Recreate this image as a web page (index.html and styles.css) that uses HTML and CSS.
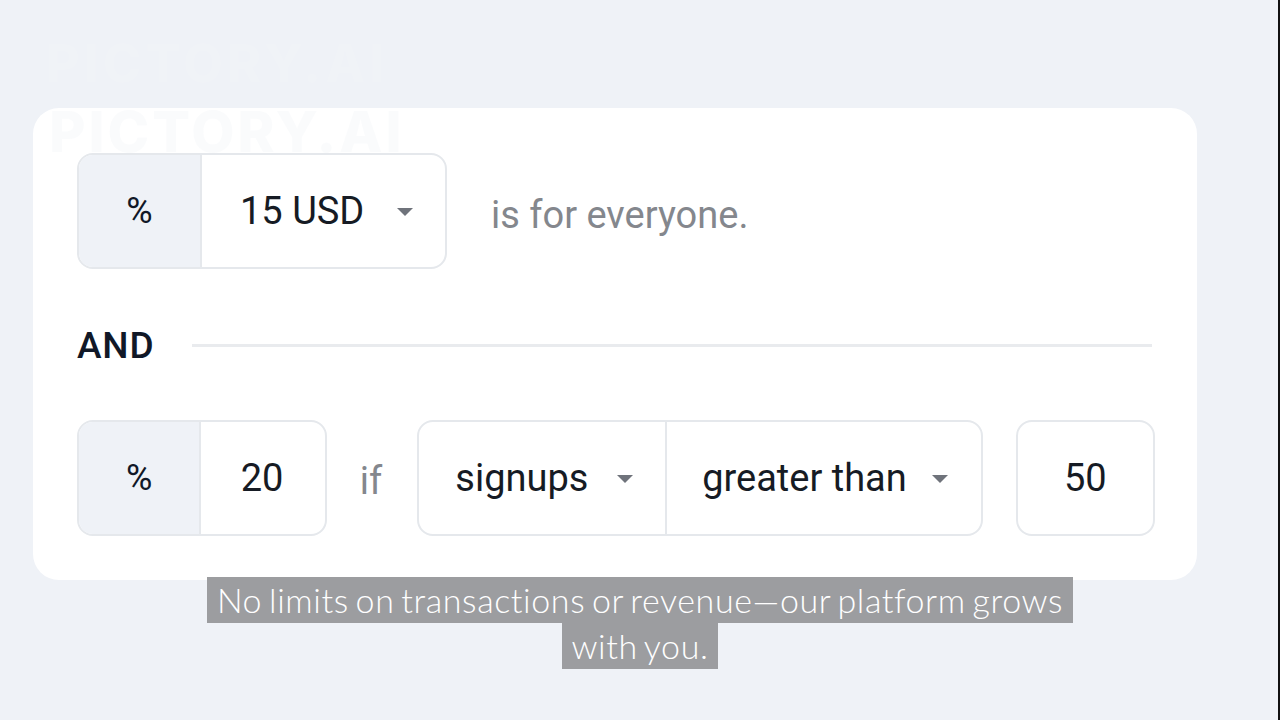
FILE: index.html
```html
<!DOCTYPE html>
<html lang="en">
<head>
<meta charset="utf-8">
<title>Commission rules</title>
<link rel="stylesheet" href="styles.css">
</head>
<body>
<div class="stage">
  <div class="ghost">PICTORY.AI</div>
  <div class="card">
    <div class="watermark">PICTORY.AI</div>
    <div class="row">
      <div class="group">
        <div class="prefix">%</div>
        <div class="cell select currency">
          <span>15 USD</span>
          <span class="caret"></span>
        </div>
      </div>
      <span class="muted everyone">is for everyone.</span>
    </div>
    <div class="divider-row">
      <span class="and">AND</span>
      <span class="rule"></span>
    </div>
    <div class="row row-gap">
      <div class="group">
        <div class="prefix">%</div>
        <div class="cell value">20</div>
      </div>
      <span class="muted if">if</span>
      <div class="group">
        <div class="cell select signups">
          <span>signups</span>
          <span class="caret"></span>
        </div>
        <div class="cell select sep compare">
          <span>greater than</span>
          <span class="caret"></span>
        </div>
      </div>
      <div class="group">
        <div class="cell number">50</div>
      </div>
    </div>
  </div>
  <div class="caption">
    <span class="caption-line">No limits on transactions or revenue—our platform grows</span>
    <span class="caption-line">with you.</span>
  </div>
  <div class="edge"></div>
</div>
</body>
</html>
```

FILE: styles.css
```css
* { box-sizing: border-box; }
html, body {
  margin: 0;
  padding: 0;
  width: 1280px;
  height: 720px;
  overflow: hidden;
  background: #eff2f7;
  font-family: Roboto, Inter, "Noto Sans", sans-serif;
}
.stage {
  position: relative;
  width: 1280px;
  height: 720px;
  padding: 108px 0 0 33px;
}
.ghost {
  position: absolute;
  left: 46px;
  top: 34px;
  line-height: 60px;
  font-family: Inter, sans-serif;
  font-size: 52px;
  font-weight: 800;
  letter-spacing: 4px;
  color: rgba(255,255,255,0.08);
}
.card {
  position: relative;
  width: 1164px;
  height: 472px;
  background: #ffffff;
  border-radius: 26px;
  padding: 45px 42px 44px 44px;
  display: flex;
  flex-direction: column;
}
.watermark {
  position: absolute;
  left: 16px;
  top: -4px;
  line-height: 56px;
  font-family: Inter, sans-serif;
  font-size: 56px;
  font-weight: 800;
  letter-spacing: 3px;
  color: rgba(232,236,242,0.2);
  pointer-events: none;
}
.row {
  display: flex;
  align-items: center;
  height: 116px;
}
.group {
  display: flex;
  height: 116px;
  border: 2px solid #e5e8ec;
  border-radius: 16px;
  overflow: hidden;
  background: #fff;
}
.prefix {
  width: 123px;
  background: #eff2f7;
  border-right: 2px solid #e5e8ec;
  display: flex;
  align-items: center;
  justify-content: center;
  font-size: 36px;
  color: #111827;
}
.cell {
  display: flex;
  align-items: center;
  font-size: 38px;
  color: #161b24;
}
.select {
  justify-content: space-between;
}
.select .caret {
  width: 0;
  height: 0;
  border-left: 8px solid transparent;
  border-right: 8px solid transparent;
  border-top: 8px solid #6f737b;
  margin-top: 2px;
}
.currency { width: 243px; padding: 0 32px 0 38px; }
.signups { width: 247px; padding: 0 32px 0 36px; }
.compare { width: 317px; padding: 0 33px 0 35px; }
.sep { border-left: 2px solid #e5e8ec; }
.value {
  width: 124px;
  justify-content: center;
  padding-right: 2px;
}
.number {
  width: 136px;
  justify-content: center;
}
.muted {
  color: #84878d;
  font-size: 38px;
}
.everyone { margin-left: 44px; margin-top: 8px; }
.row-gap { gap: 33px; }
.if { margin: 6px 2px 0 0; }
.divider-row {
  display: flex;
  align-items: center;
  height: 40px;
  margin: 56px 0 55px;
}
.and {
  font-size: 37px;
  font-weight: 500;
  letter-spacing: 0.8px;
  color: #111827;
  width: 115px;
}
.rule {
  flex: 1;
  height: 3px;
  background: #e9ebee;
  margin-right: 3px;
}
.caption {
  position: absolute;
  left: 140px;
  top: 577px;
  width: 1000px;
  display: flex;
  flex-direction: column;
  align-items: center;
}
.caption-line {
  display: block;
  height: 46px;
  line-height: 46px;
  padding: 0 10px;
  background: #9c9da0;
  color: #ffffff;
  font-family: Lato, "Open Sans", sans-serif;
  font-weight: 300;
  font-size: 34px;
  letter-spacing: 0.6px;
  word-spacing: -3px;
  white-space: nowrap;
}
.edge {
  position: absolute;
  right: 0;
  top: 0;
  width: 2px;
  height: 720px;
  background: #111;
}
```
